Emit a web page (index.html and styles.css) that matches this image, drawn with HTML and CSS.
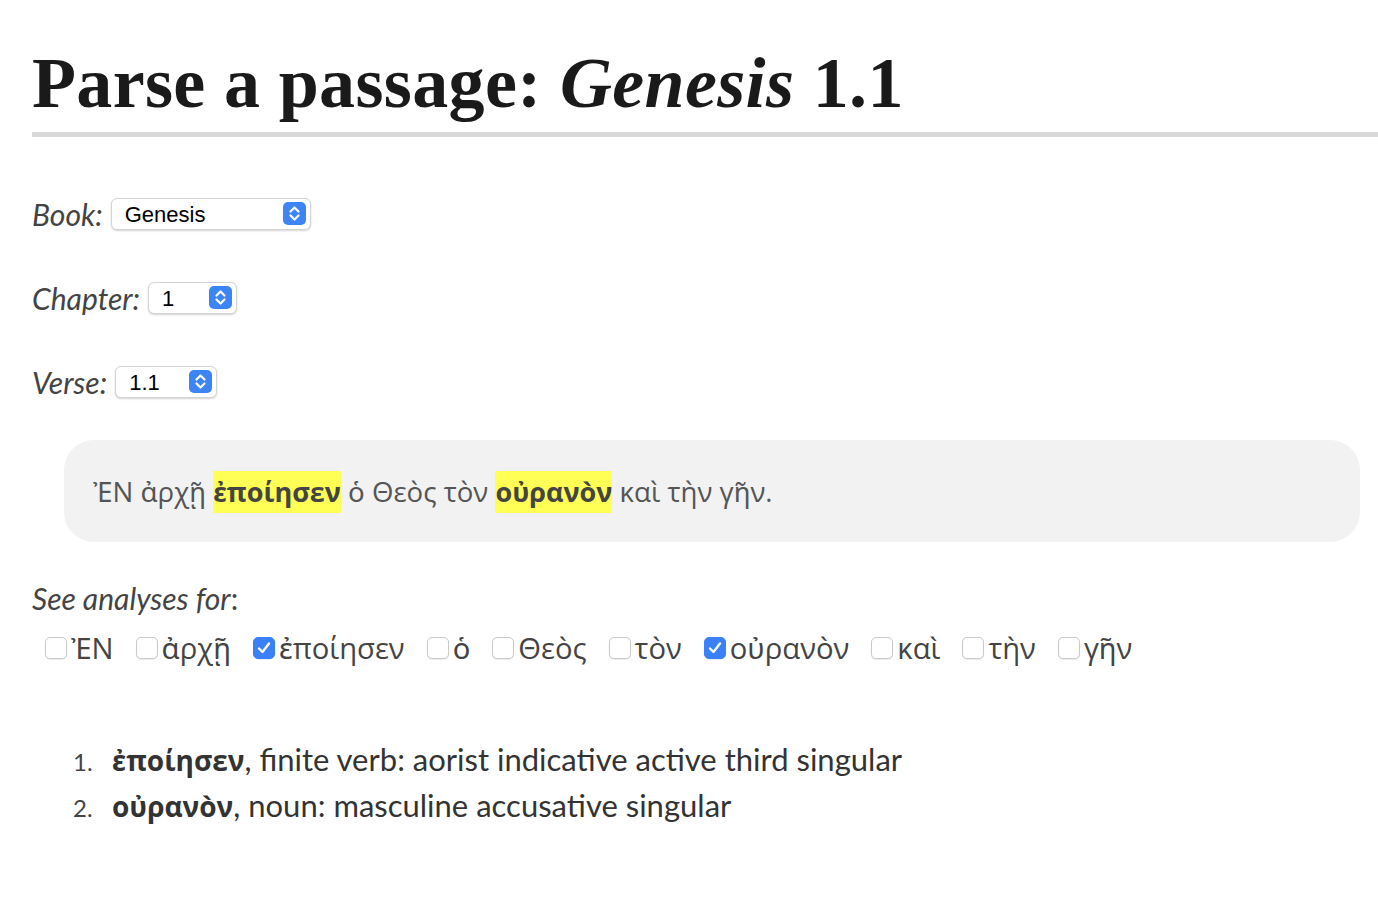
FILE: index.html
```html
<!DOCTYPE html>
<html lang="en">
<head>
<meta charset="utf-8">
<title>Parse a passage: Genesis 1.1</title>
<link rel="stylesheet" href="styles.css">
</head>
<body>
<h1 class="title">Parse a passage: <em>Genesis</em> 1.1</h1>

<div class="field">
  <label class="flabel" for="book">Book</label>:
  <span class="sel sel-book">
    <select id="book"><option>Genesis</option></select>
    <svg class="arrows" width="23" height="23" viewBox="0 0 23 23"><rect width="23" height="23" rx="5" fill="#3d84f5"/><path d="M7.5 9.5 L11.5 5.5 L15.5 9.5 M7.5 13.5 L11.5 17.5 L15.5 13.5" fill="none" stroke="#fff" stroke-width="2.2" stroke-linecap="round" stroke-linejoin="round"/></svg>
  </span>
</div>

<div class="field">
  <label class="flabel" for="chapter">Chapter</label>:
  <span class="sel sel-chapter">
    <select id="chapter"><option>1</option></select>
    <svg class="arrows" width="23" height="23" viewBox="0 0 23 23"><rect width="23" height="23" rx="5" fill="#3d84f5"/><path d="M7.5 9.5 L11.5 5.5 L15.5 9.5 M7.5 13.5 L11.5 17.5 L15.5 13.5" fill="none" stroke="#fff" stroke-width="2.2" stroke-linecap="round" stroke-linejoin="round"/></svg>
  </span>
</div>

<div class="field">
  <label class="flabel" for="verse">Verse</label>:
  <span class="sel sel-verse">
    <select id="verse"><option>1.1</option></select>
    <svg class="arrows" width="23" height="23" viewBox="0 0 23 23"><rect width="23" height="23" rx="5" fill="#3d84f5"/><path d="M7.5 9.5 L11.5 5.5 L15.5 9.5 M7.5 13.5 L11.5 17.5 L15.5 13.5" fill="none" stroke="#fff" stroke-width="2.2" stroke-linecap="round" stroke-linejoin="round"/></svg>
  </span>
</div>

<div class="passage">
  <p class="greek">ἘΝ ἀρχῇ <mark class="hl">ἐποίησεν</mark> ὁ Θεὸς τὸν <mark class="hl">οὐρανὸν</mark> καὶ τὴν γῆν.</p>
</div>

<p class="see"><em>See analyses for</em>:</p>
<div class="words">
  <label class="word"><span class="box"></span>ἘΝ</label>
  <label class="word"><span class="box"></span>ἀρχῇ</label>
  <label class="word"><span class="box on"><svg width="16" height="16" viewBox="0 0 16 16"><path d="M3 8.5 L6.5 12 L13 3.5" fill="none" stroke="#fff" stroke-width="2.4" stroke-linecap="round" stroke-linejoin="round"/></svg></span>ἐποίησεν</label>
  <label class="word"><span class="box"></span>ὁ</label>
  <label class="word"><span class="box"></span>Θεὸς</label>
  <label class="word"><span class="box"></span>τὸν</label>
  <label class="word"><span class="box on"><svg width="16" height="16" viewBox="0 0 16 16"><path d="M3 8.5 L6.5 12 L13 3.5" fill="none" stroke="#fff" stroke-width="2.4" stroke-linecap="round" stroke-linejoin="round"/></svg></span>οὐρανὸν</label>
  <label class="word"><span class="box"></span>καὶ</label>
  <label class="word"><span class="box"></span>τὴν</label>
  <label class="word"><span class="box"></span>γῆν</label>
</div>

<ol class="analyses">
  <li><strong class="gk">ἐποίησεν</strong>, finite verb: aorist indicative active third singular</li>
  <li><strong class="gk">οὐρανὸν</strong>, noun: masculine accusative singular</li>
</ol>
</body>
</html>
```
FILE: styles.css
```css
html, body {
  margin: 0;
  background: #fff;
}
body {
  padding: 0 0 0 32px;
  font-family: "Lato", "Open Sans", sans-serif;
  color: #333;
}
.title {
  margin: 40px 0 0 0;
  padding-bottom: 6px;
  font-family: "Liberation Serif", serif;
  font-weight: bold;
  font-size: 72px;
  line-height: 86px;
  letter-spacing: 0.35px;
  color: #1a1a1a;
  border-bottom: 5px solid #d9d9d9;
}
.title em {
  font-style: italic;
}
.field {
  display: flex;
  align-items: center;
  height: 32px;
  margin-top: 61px;
  font-size: 30px;
  line-height: 32px;
  font-style: italic;
  color: #444;
}
.field + .field {
  margin-top: 52px;
}
.flabel {
  font-style: italic;
}
.sel {
  position: relative;
  display: flex;
  margin-left: 8px;
  height: 32px;
}
.sel select {
  appearance: none;
  -webkit-appearance: none;
  height: 32px;
  border: 1px solid #d4d4d4;
  border-radius: 6px;
  background: #fff;
  box-shadow: 0 1px 2px rgba(0,0,0,0.18);
  font-family: "Liberation Sans", Arial, sans-serif;
  font-style: normal;
  font-size: 22px;
  color: #000;
  padding: 0 0 0 13px;
}
.sel-book select { width: 200px; }
.sel-chapter select { width: 89px; }
.sel-verse select { width: 102px; }
.arrows {
  position: absolute;
  right: 5px;
  top: 4px;
  pointer-events: none;
}
.passage {
  margin: 42px 18px 0 32px;
  background: #f2f2f2;
  border-radius: 30px;
  height: 102px;
  display: flex;
  align-items: center;
  padding: 0 29px;
}
.greek {
  margin: 0;
  font-family: "Open Sans", "Noto Sans", sans-serif;
  font-size: 27.6px;
  color: #555;
}
.hl {
  background: #ffff55;
  font-weight: bold;
  font-size: 27px;
  color: #444;
  padding: 2px 0 3px;
}
.see {
  margin: 38px 0 0 0;
  font-size: 30px;
  color: #444;
}
.see em {
  font-style: italic;
}
.words {
  display: flex;
  gap: 22px;
  margin: 12px 0 0 13px;
  font-family: "Open Sans", "Noto Sans", sans-serif;
  font-size: 29.2px;
  color: #444;
}
.word {
  display: flex;
  align-items: center;
}
.box {
  width: 22px;
  height: 22px;
  box-sizing: border-box;
  border: 1px solid #c9c9c9;
  border-radius: 5px;
  background: #fff;
  box-shadow: 0 1px 1px rgba(0,0,0,0.08);
  margin-right: 4px;
  display: flex;
  align-items: center;
  justify-content: center;
}
.box.on {
  background: #3a80f6;
  border-color: #3a80f6;
}
.analyses {
  margin: 68px 0 0 0;
  padding-left: 41px;
  list-style: none;
  counter-reset: item;
  font-size: 31px;
  line-height: 46px;
  color: #333;
}
.analyses li {
  counter-increment: item;
  height: 46px;
}
.analyses li::before {
  content: counter(item) ".";
  display: inline-block;
  width: 39px;
  font-size: 24px;
  line-height: 1;
  color: #444;
}
.gk {
  font-family: "Open Sans", "Noto Sans", sans-serif;
  font-weight: bold;
  font-size: 28px;
  line-height: 1;
  color: #333;
}
```
